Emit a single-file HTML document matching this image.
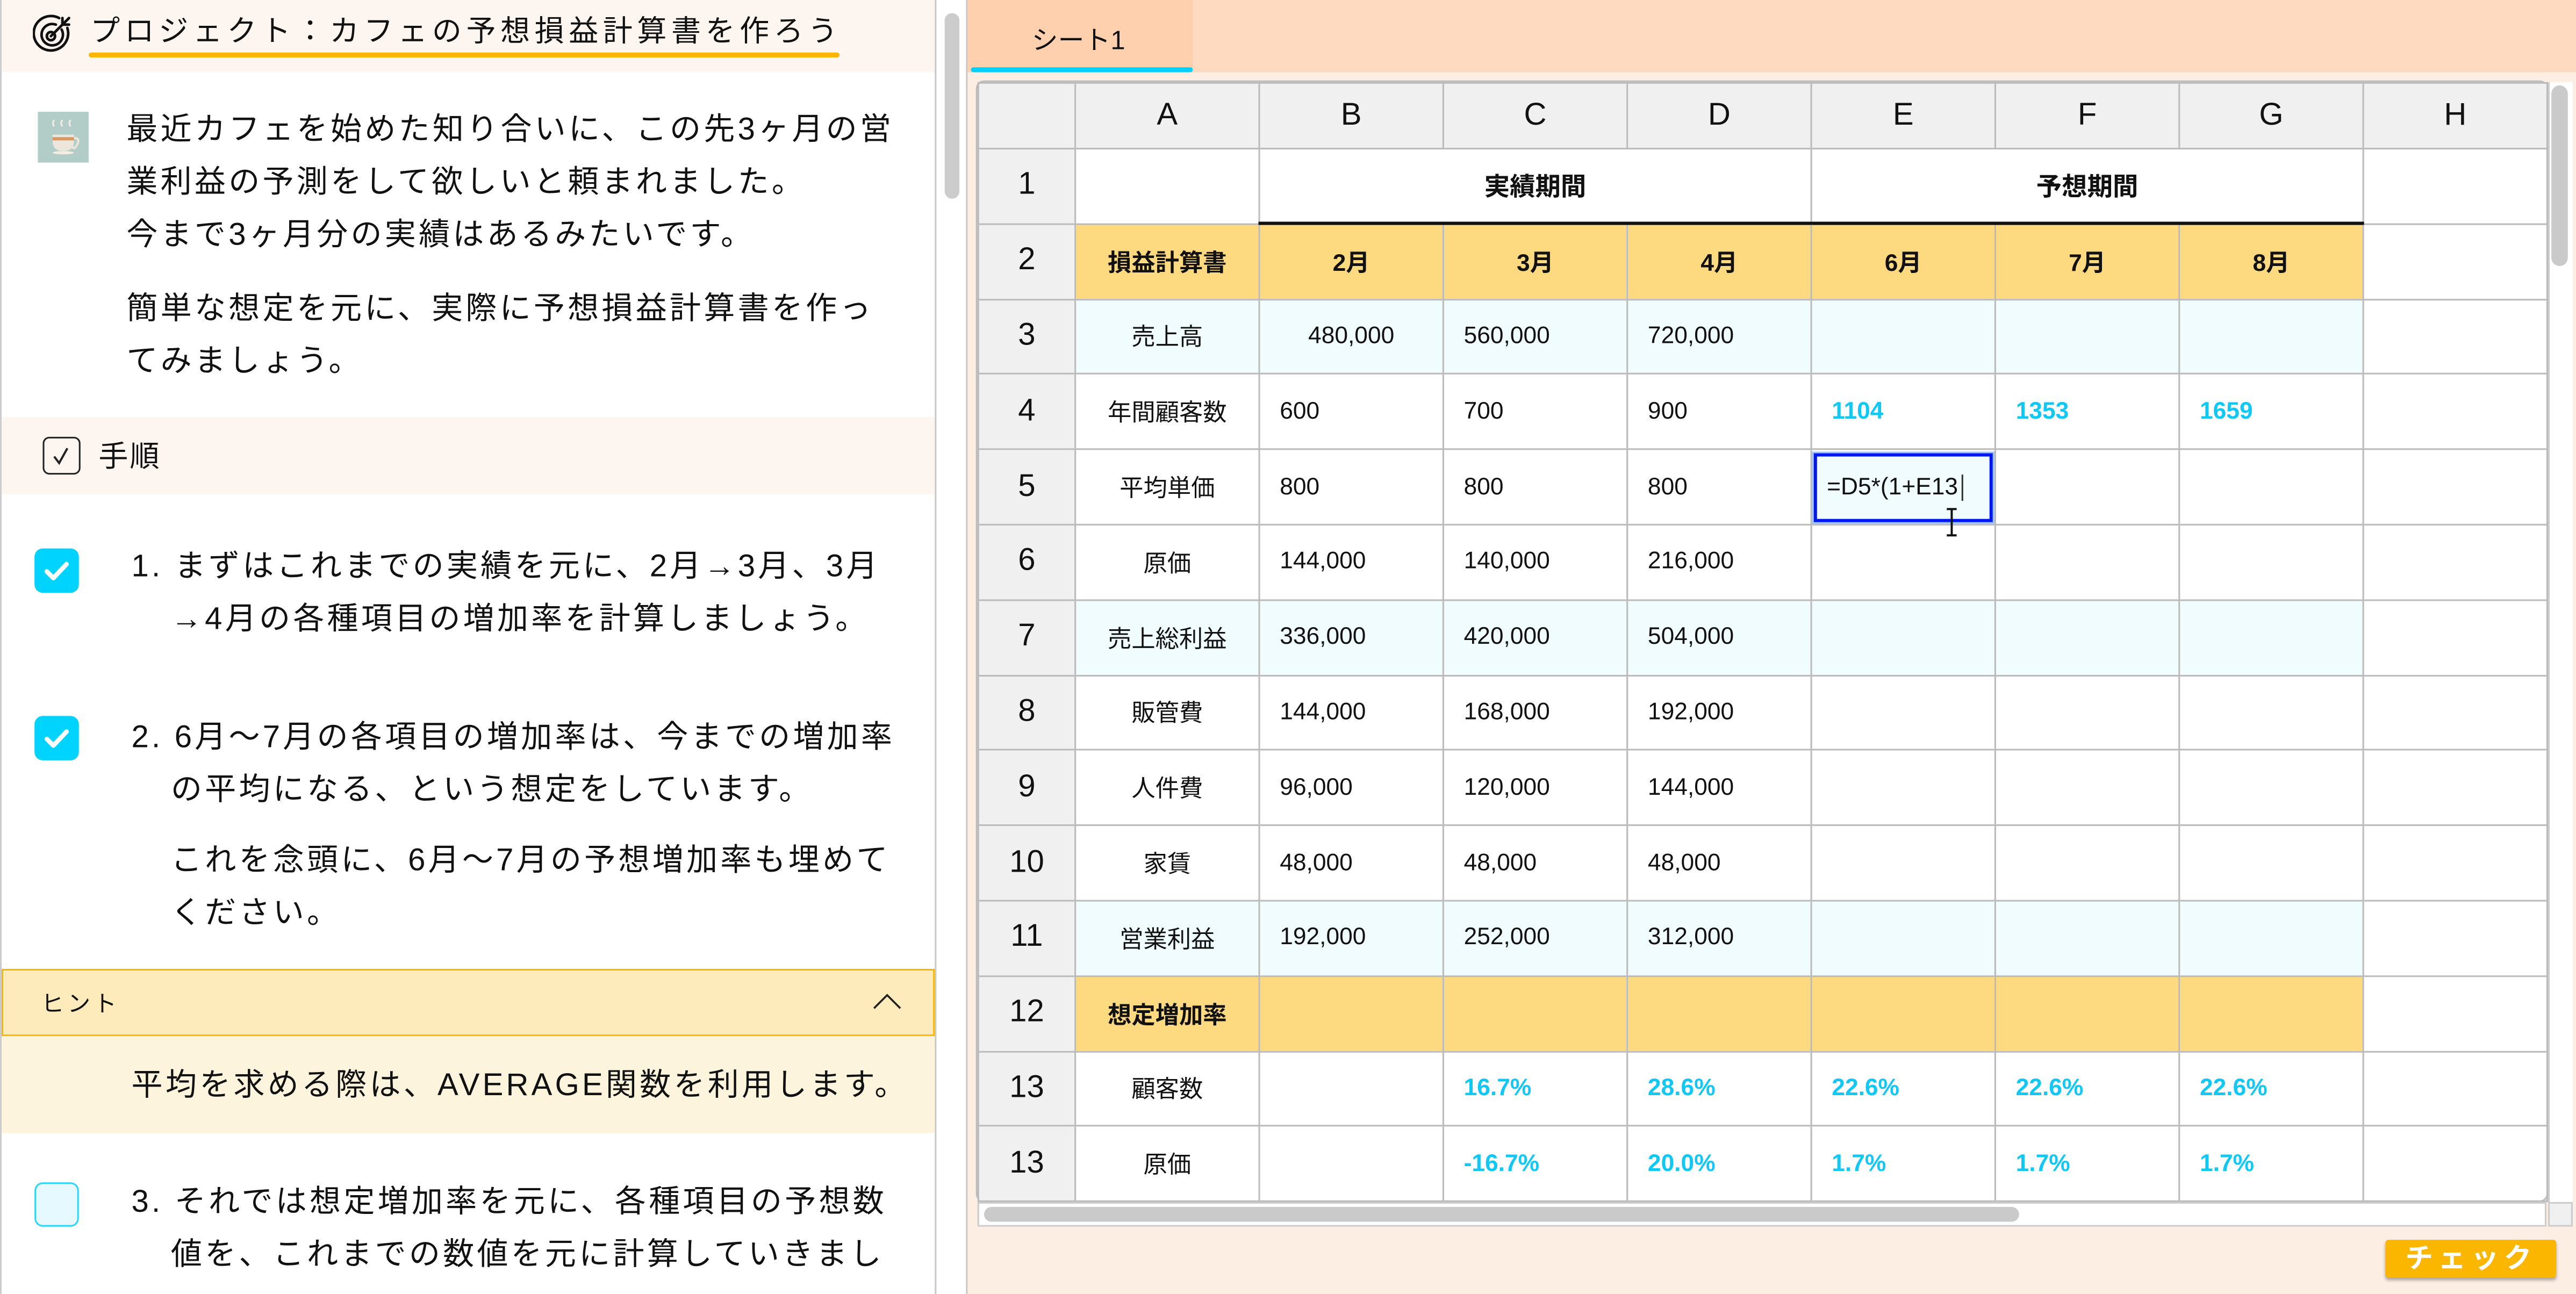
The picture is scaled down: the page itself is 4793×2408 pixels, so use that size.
<!DOCTYPE html>
<html><head><meta charset="utf-8"><style>
*{margin:0;padding:0;box-sizing:border-box}
html,body{width:4793px;height:2408px;overflow:hidden;background:#fff}
#s{position:absolute;left:0;top:0;width:1568px;height:788px;transform:scale(3.05676,3.05584);transform-origin:0 0;font-family:"Liberation Sans","Noto Sans CJK JP",sans-serif;color:#111}
.a{position:absolute}
.jp{font-size:19px;line-height:32px;white-space:nowrap;letter-spacing:1.7px}
.cb{position:absolute;width:27px;height:27px;border-radius:5px;background:#00d3fd}
.cb svg{position:absolute;left:0;top:0}
table{position:absolute;left:595px;top:50px;border-collapse:collapse;table-layout:fixed;font-size:14.5px}
td{border:1px solid #bbb;text-align:center;white-space:nowrap;overflow:hidden;height:45.8px;padding:0}
td.h{background:#f0f0f0;font-size:19px}
tr.hd td{height:40px;background:#f0f0f0;font-size:19px}
.y{background:#fdda80;font-weight:bold}
.c{background:#f0fcfe}
.l{text-align:left;padding-left:12px}
.b{color:#10c8f5;font-weight:bold;text-align:left;padding-left:12px;font-size:14.5px}
</style></head><body><div id="s">
<div class="a" style="left:0;top:0;width:570px;height:788px;background:#fff;border-left:1px solid #ccc"></div>
<div class="a" style="left:1px;top:0;width:568px;height:44px;background:#fdf5ef"></div>
<svg class="a" style="left:20px;top:8px" width="26" height="26" viewBox="0 0 26 26" fill="none" stroke="#111" stroke-width="1.6" stroke-linecap="round"><path d="M21 9 A10.5 10.5 0 1 1 16 3"/><path d="M17.5 10 A6.5 6.5 0 1 1 14 7"/><circle cx="11" cy="14" r="2.5"/><path d="M11 14 L19 6"/><path d="M18 3 L18 7 L22 7 M19 6 L22 3"/></svg>
<div class="a" style="left:55px;top:7px;font-size:18px;line-height:24px;letter-spacing:2.8px;white-space:nowrap">プロジェクト：カフェの予想損益計算書を作ろう</div>
<div class="a" style="left:54px;top:32px;width:457px;height:3px;border-radius:2px;background:#fbb600"></div>
<svg class="a" style="left:23px;top:68px" width="31" height="31" viewBox="0 0 31 31"><rect width="31" height="31" fill="#b2cdc7"/><path d="M10 9q-1.5-2 0-4M15 9q-1.5-2 0-4M20 9q-1.5-2 0-4" stroke="#f3ede2" stroke-width="1" fill="none"/><path d="M9 14h13v4q0 6-6.5 6T9 18z" fill="#ede6dc"/><rect x="9" y="15.5" width="13" height="2" fill="#d89a62"/><path d="M22 16q4 0 2 4t-3 1" stroke="#ede6dc" stroke-width="1.3" fill="none"/><ellipse cx="15.5" cy="25" rx="6.5" ry="1" fill="#f3ede2"/></svg>
<div class="a jp" style="left:77px;top:64px">最近カフェを始めた知り合いに、この先3ヶ月の営<br>業利益の予測をして欲しいと頼まれました。<br>今まで3ヶ月分の実績はあるみたいです。</div>
<div class="a jp" style="left:77px;top:173px">簡単な想定を元に、実際に予想損益計算書を作っ<br>てみましょう。</div>
<div class="a" style="left:1px;top:254px;width:568px;height:47px;background:#fdf5ef"></div>
<div class="a" style="left:26px;top:266px;width:23px;height:23px;border:1.6px solid #222;border-radius:4px"></div>
<svg class="a" style="left:26px;top:266px" width="23" height="23"><path d="M7 12l3 4 5-9" stroke="#222" stroke-width="1.3" fill="none"/></svg>
<div class="a" style="left:60px;top:264px;font-size:18px;line-height:28px;letter-spacing:1px">手順</div>
<div class="cb" style="left:21px;top:334px"><svg width="27" height="27"><path d="M7.5 14l4 4 8-8.5" stroke="#fff" stroke-width="2.8" fill="none" stroke-linecap="round" stroke-linejoin="round"/></svg></div>
<div class="a jp" style="left:80px;top:330px">1. まずはこれまでの実績を元に、2月→3月、3月<br><span style="padding-left:24px">→4月の各種項目の増加率を計算しましょう。</span></div>
<div class="cb" style="left:21px;top:436px"><svg width="27" height="27"><path d="M7.5 14l4 4 8-8.5" stroke="#fff" stroke-width="2.8" fill="none" stroke-linecap="round" stroke-linejoin="round"/></svg></div>
<div class="a jp" style="left:80px;top:434px">2. 6月〜7月の各項目の増加率は、今までの増加率<br><span style="padding-left:24px">の平均になる、という想定をしています。</span></div>
<div class="a jp" style="left:104px;top:509px">これを念頭に、6月〜7月の予想増加率も埋めて<br>ください。</div>
<div class="a" style="left:1px;top:590px;width:568px;height:41px;background:#fdebbc;border:1.5px solid #fbb600"></div>
<div class="a" style="left:25px;top:601px;font-size:14px;letter-spacing:2px">ヒント</div>
<svg class="a" style="left:530px;top:603px" width="20" height="14"><path d="M2 11L10 3L18 11" stroke="#222" stroke-width="1.2" fill="none"/></svg>
<div class="a" style="left:1px;top:631px;width:568px;height:59px;background:#fdf4dd"></div>
<div class="a jp" style="left:80px;top:646px">平均を求める際は、AVERAGE関数を利用します。</div>
<div class="a" style="left:21px;top:720px;width:27px;height:27px;border:1.5px solid #2bd6fc;border-radius:5px;background:#e6f9fe"></div>
<div class="a jp" style="left:80px;top:717px">3. それでは想定増加率を元に、各種項目の予想数<br><span style="padding-left:24px">値を、これまでの数値を元に計算していきまし</span></div>
<div class="a" style="left:569px;top:0;width:20px;height:788px;background:#fff;border-left:1.3px solid #c8c8c8;border-right:1.3px solid #c8c8c8"></div>
<div class="a" style="left:574.5px;top:8px;width:9px;height:113px;border-radius:5px;background:#ccc"></div>
<div class="a" style="left:589px;top:0;width:979px;height:788px;background:#fdeee4"></div>
<div class="a" style="left:589px;top:0;width:979px;height:44px;background:#fedac0"></div>
<div class="a" style="left:589px;top:0;width:137px;height:44px;background:#fed0ae"></div>
<div class="a" style="left:591px;top:41px;width:135px;height:3px;border-radius:2px;background:#00d0fd"></div>
<div class="a" style="left:628px;top:11px;font-size:16px">シート1</div>
<div class="a" style="left:594px;top:49px;width:957px;height:683px;border:1.5px solid #bbb;border-radius:5px;background:#fff"></div>
<table>
<colgroup><col style="width:59px"><col style="width:112px"><col style="width:112px"><col style="width:112px"><col style="width:112px"><col style="width:112px"><col style="width:112px"><col style="width:112px"><col style="width:112px"></colgroup>
<tr class="hd"><td></td><td>A</td><td>B</td><td>C</td><td>D</td><td>E</td><td>F</td><td>G</td><td>H</td></tr>
<tr><td class="h">1</td><td></td><td colspan="3" style="font-weight:bold;font-size:15.5px;border-bottom:2px solid #111">実績期間</td><td colspan="3" style="font-weight:bold;font-size:15.5px;border-bottom:2px solid #111">予想期間</td><td></td></tr>
<tr><td class="h">2</td><td class="y">損益計算書</td><td class="y">2月</td><td class="y">3月</td><td class="y">4月</td><td class="y">6月</td><td class="y">7月</td><td class="y">8月</td><td></td></tr>
<tr><td class="h">3</td><td class="c">売上高</td><td class="c">480,000</td><td class="c l">560,000</td><td class="c l">720,000</td><td class="c"></td><td class="c"></td><td class="c"></td><td></td></tr>
<tr><td class="h">4</td><td>年間顧客数</td><td class="l">600</td><td class="l">700</td><td class="l">900</td><td class="b">1104</td><td class="b">1353</td><td class="b">1659</td><td></td></tr>
<tr><td class="h">5</td><td>平均単価</td><td class="l">800</td><td class="l">800</td><td class="l">800</td><td style="padding:0"><div style="margin:1px;height:42px;border:2px solid #0018f0;outline:1.5px solid #9fc2ff;background:#f0fcfe;text-align:left;padding-left:6px;line-height:38px;font-size:14.5px">=D5*(1+E13<span style="border-left:1px solid #333;margin-left:2px"></span></div></td><td></td><td></td><td></td></tr>
<tr><td class="h">6</td><td>原価</td><td class="l">144,000</td><td class="l">140,000</td><td class="l">216,000</td><td></td><td></td><td></td><td></td></tr>
<tr><td class="h">7</td><td class="c">売上総利益</td><td class="c l">336,000</td><td class="c l">420,000</td><td class="c l">504,000</td><td class="c"></td><td class="c"></td><td class="c"></td><td></td></tr>
<tr><td class="h">8</td><td>販管費</td><td class="l">144,000</td><td class="l">168,000</td><td class="l">192,000</td><td></td><td></td><td></td><td></td></tr>
<tr><td class="h">9</td><td>人件費</td><td class="l">96,000</td><td class="l">120,000</td><td class="l">144,000</td><td></td><td></td><td></td><td></td></tr>
<tr><td class="h">10</td><td>家賃</td><td class="l">48,000</td><td class="l">48,000</td><td class="l">48,000</td><td></td><td></td><td></td><td></td></tr>
<tr><td class="h">11</td><td class="c">営業利益</td><td class="c l">192,000</td><td class="c l">252,000</td><td class="c l">312,000</td><td class="c"></td><td class="c"></td><td class="c"></td><td></td></tr>
<tr><td class="h">12</td><td class="y">想定増加率</td><td class="y"></td><td class="y"></td><td class="y"></td><td class="y"></td><td class="y"></td><td class="y"></td><td></td></tr>
<tr><td class="h">13</td><td>顧客数</td><td></td><td class="b">16.7%</td><td class="b">28.6%</td><td class="b">22.6%</td><td class="b">22.6%</td><td class="b">22.6%</td><td></td></tr>
<tr><td class="h" style="height:42px">13</td><td>原価</td><td></td><td class="b">-16.7%</td><td class="b">20.0%</td><td class="b">1.7%</td><td class="b">1.7%</td><td class="b">1.7%</td><td></td></tr>
</table>
<svg class="a" style="left:1182px;top:308px" width="12" height="20"><path d="M3 2h6M6 2v16M3 18h6" stroke="#111" stroke-width="1.3" fill="none"/></svg>
<div class="a" style="left:595px;top:732px;width:955px;height:15px;background:#fff;border:1.3px solid #ccc"></div>
<div class="a" style="left:599px;top:735px;width:630px;height:9px;border-radius:5px;background:#cacaca"></div>
<div class="a" style="left:1551px;top:50px;width:15px;height:697px;background:#fff;border-left:1.3px solid #ccc"></div>
<div class="a" style="left:1553px;top:52px;width:10px;height:110px;border-radius:5px;background:#cacaca"></div>
<div class="a" style="left:1551px;top:732px;width:15px;height:15px;background:#f0f0f0;border:1px solid #ccc"></div>
<div class="a" style="left:1452px;top:755px;width:104px;height:23px;background:#fbb600;border-radius:2px;box-shadow:0 1.5px 2px rgba(0,0,0,.3);color:#fff;font-weight:bold;font-size:17px;line-height:23px;text-align:center;letter-spacing:3px">チェック</div>
</div></body></html>
